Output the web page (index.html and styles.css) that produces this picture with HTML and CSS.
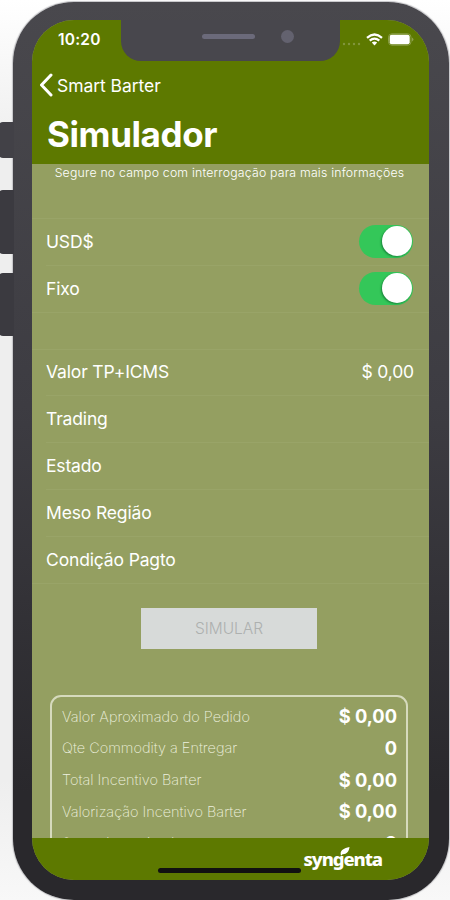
FILE: index.html
```html
<!DOCTYPE html>
<html lang="pt-BR">
<head>
<meta charset="utf-8">
<title>Simulador</title>
<link rel="stylesheet" href="styles.css">
</head>
<body>
<main class="stage">
  <i class="key key-mute"></i><i class="key key-up"></i><i class="key key-down"></i>
  <div class="phone">
    <div class="screen">
      <div class="notch"><i class="speaker"></i><i class="camera"></i></div>
      <header class="header">
        <div class="status">
          <span class="time">10:20</span>
          <div class="signals">
            <svg class="dots" viewBox="0 0 19 4"><g fill="#82963c"><circle cx="2" cy="2" r="1.2"/><circle cx="7" cy="2" r="1.2"/><circle cx="12" cy="2" r="1.2"/><circle cx="17" cy="2" r="1.2"/></g></svg>
            <svg class="wifi" viewBox="0 0 17 13"><g fill="none" stroke="#fff" stroke-width="2.2"><path d="M1 4.800Q8.500-1.800 16 4.800"/><path d="M3.700 7.700Q8.500 3.500 13.300 7.700"/></g><path fill="#fff" d="M5.800 9.500Q8.500 7.300 11.200 9.500L8.500 12.400Z"/></svg>
            <svg class="battery" viewBox="0 0 26 13"><rect x=".5" y=".8" width="22.500" height="11.400" rx="3.400" fill="none" stroke="#8c9f49"/><rect x="1.700" y="1.800" width="20" height="9.400" rx="2" fill="#fff"/><path d="M24.300 4.500q2 2 0 4z" fill="#a5b36c"/></svg>
          </div>
        </div>
        <div class="back">
          <svg class="chevron" viewBox="0 0 14 24"><path d="M12 2 2.500 12 12 22" fill="none" stroke="#fff" stroke-width="3" stroke-linecap="round" stroke-linejoin="round"/></svg>
          <span>Smart Barter</span>
        </div>
        <h1 class="title">Simulador</h1>
      </header>
      <section class="content">
        <p class="hint">Segure no campo com interrogação para mais informações</p>
        <div class="row"><span>USD$</span><i class="switch"></i></div>
        <div class="row row-last"><span>Fixo</span><i class="switch"></i></div>
        <div class="spacer"></div>
        <div class="row"><span>Valor TP+ICMS</span><span>$ 0,00</span></div>
        <div class="row"><span>Trading</span></div>
        <div class="row"><span>Estado</span></div>
        <div class="row"><span>Meso Região</span></div>
        <div class="row row-last"><span>Condição Pagto</span></div>
        <button class="simulate" disabled>SIMULAR</button>
        <div class="summary">
          <div class="line"><span>Valor Aproximado do Pedido</span><b>$ 0,00</b></div>
          <div class="line"><span>Qte Commodity a Entregar</span><b>0</b></div>
          <div class="line"><span>Total Incentivo Barter</span><b>$ 0,00</b></div>
          <div class="line"><span>Valorização Incentivo Barter</span><b>$ 0,00</b></div>
          <div class="line"><span>Sacas Incentivadas</span><b>0</b></div>
        </div>
      </section>
      <footer class="footer">
        <i class="home"></i>
        <div class="logo">syngenta<svg class="leaf" viewBox="0 0 10 9"><path d="M1 8.800C-.5 3.500 3 1.500 9.500 0 9 4.500 6.500 7.500 2.500 7.200Z" fill="#fff"/></svg></div>
      </footer>
    </div>
  </div>
</main>
</body>
</html>
```
FILE: styles.css
```css
* { box-sizing: border-box; }
body { margin: 0; font-family: Inter, "Liberation Sans", sans-serif; color: #fff; }
.stage {
  position: relative;
  width: 450px;
  height: 900px;
  padding: 2px 1px 0 13px;
  overflow: hidden;
  background: linear-gradient(#fff 0, #eee 150px, #eee 780px, #f8f8f8);
}
.key { position: absolute; z-index: 1; left: -2px; width: 16px; border-radius: 5px 0 0 5px; background: #3b3a40; }
.key-mute { top: 122px; height: 36px; background: #424147; }
.key-up { top: 190px; height: 64px; }
.key-down { top: 273px; height: 63px; }
.phone {
  position: relative;
  height: 898px;
  padding: 18px 20px 20px 19px;
  border-radius: 61px;
  background: linear-gradient(#49484d, #3d3c42 45%, #29282c 88%);
  box-shadow: 0 0 1px 1px #c4c4c7;
}
.screen {
  position: relative;
  display: flex;
  flex-direction: column;
  height: 860px;
  overflow: hidden;
  border-radius: 42px;
  background: #949f61;
}
.notch {
  position: absolute;
  z-index: 1;
  top: -1px;
  left: 89px;
  display: flex;
  align-items: center;
  width: 219px;
  height: 42px;
  padding: 0 46px 8px 81px;
  justify-content: space-between;
  border-radius: 0 0 20px 20px;
  background: #48474d;
}
.speaker { width: 53px; height: 5px; border-radius: 3px; background: #6b6a7a; }
.camera { width: 13px; height: 13px; border-radius: 50%; background: #63626f; }
.header { flex: none; height: 144px; background: #5d7900; }
.status { display: flex; justify-content: space-between; height: 40px; padding: 10px 15px 0 26px; }
.time { font-size: 15.500px; line-height: 20px; font-weight: 600; letter-spacing: .2px; }
.signals { display: flex; gap: 5px; }
.dots { width: 19px; height: 4px; margin-top: 12px; }
.wifi { width: 17px; height: 13px; margin-top: 3px; }
.battery { width: 26px; height: 13px; margin-top: 3px; }
.back { display: flex; align-items: center; gap: 4px; height: 50px; padding-left: 7px; font-size: 17.500px; letter-spacing: -.05px; }
.chevron { width: 14px; height: 24px; }
.title { margin: 0; padding-left: 15px; font-size: 35px; line-height: 48px; font-weight: 700; letter-spacing: -.4px; }
.content { flex: 1; min-height: 0; overflow: hidden; }
.hint { height: 55px; margin: 0; padding: 1px 2px 0 0; border-bottom: 1px solid #99a468; font-size: 12.300px; line-height: 16px; text-align: center; font-weight: 300; letter-spacing: .2px; white-space: nowrap; }
.row {
  display: flex;
  align-items: center;
  justify-content: space-between;
  height: 46.800px;
  margin-left: 14px;
  padding: 0 15px 1px 0;
  border-bottom: 1px solid #99a468;
  font-size: 17.500px;
  letter-spacing: -.15px;
}
.row-last { margin-left: 0; padding-left: 14px; }
.spacer { height: 37px; border-bottom: 1px solid #99a468; }
.switch { width: 54px; height: 33px; margin-right: 1px; padding: 1.500px; border-radius: 17px; background: #34c759; }
.switch::after { content: ""; display: block; width: 30px; height: 30px; margin-left: auto; border-radius: 50%; background: #fff; box-shadow: -1px 1px 2px #1a873c; }
.simulate { display: block; width: 176px; height: 41px; margin: 24px 0 0 109px; padding: 0; border: 0; background: #d7dad9; color: #adb0af; font: 300 15.500px Inter, sans-serif; }
.summary { width: 358px; height: 220px; margin: 46px 0 0 18px; padding: 4px 9px 0 10px; border: 2px solid #d6dabd; border-radius: 11px; }
.line { display: flex; align-items: center; justify-content: space-between; height: 31.600px; }
.line span { font-size: 14.500px; font-weight: 200; color: #edf0df; }
.line b { font-size: 18.300px; font-weight: 700; }
.footer { position: relative; flex: none; display: flex; justify-content: flex-end; height: 42px; padding-right: 47px; background: #5d7900; }
.home { position: absolute; left: 126px; top: 30px; width: 143px; height: 5px; border-radius: 3px; background: #111; }
.logo { position: relative; font: 800 18.500px/42px "Noto Sans", sans-serif; letter-spacing: -1.100px; }
.leaf { position: absolute; left: 36px; top: 9px; width: 10px; height: 9px; }
```
